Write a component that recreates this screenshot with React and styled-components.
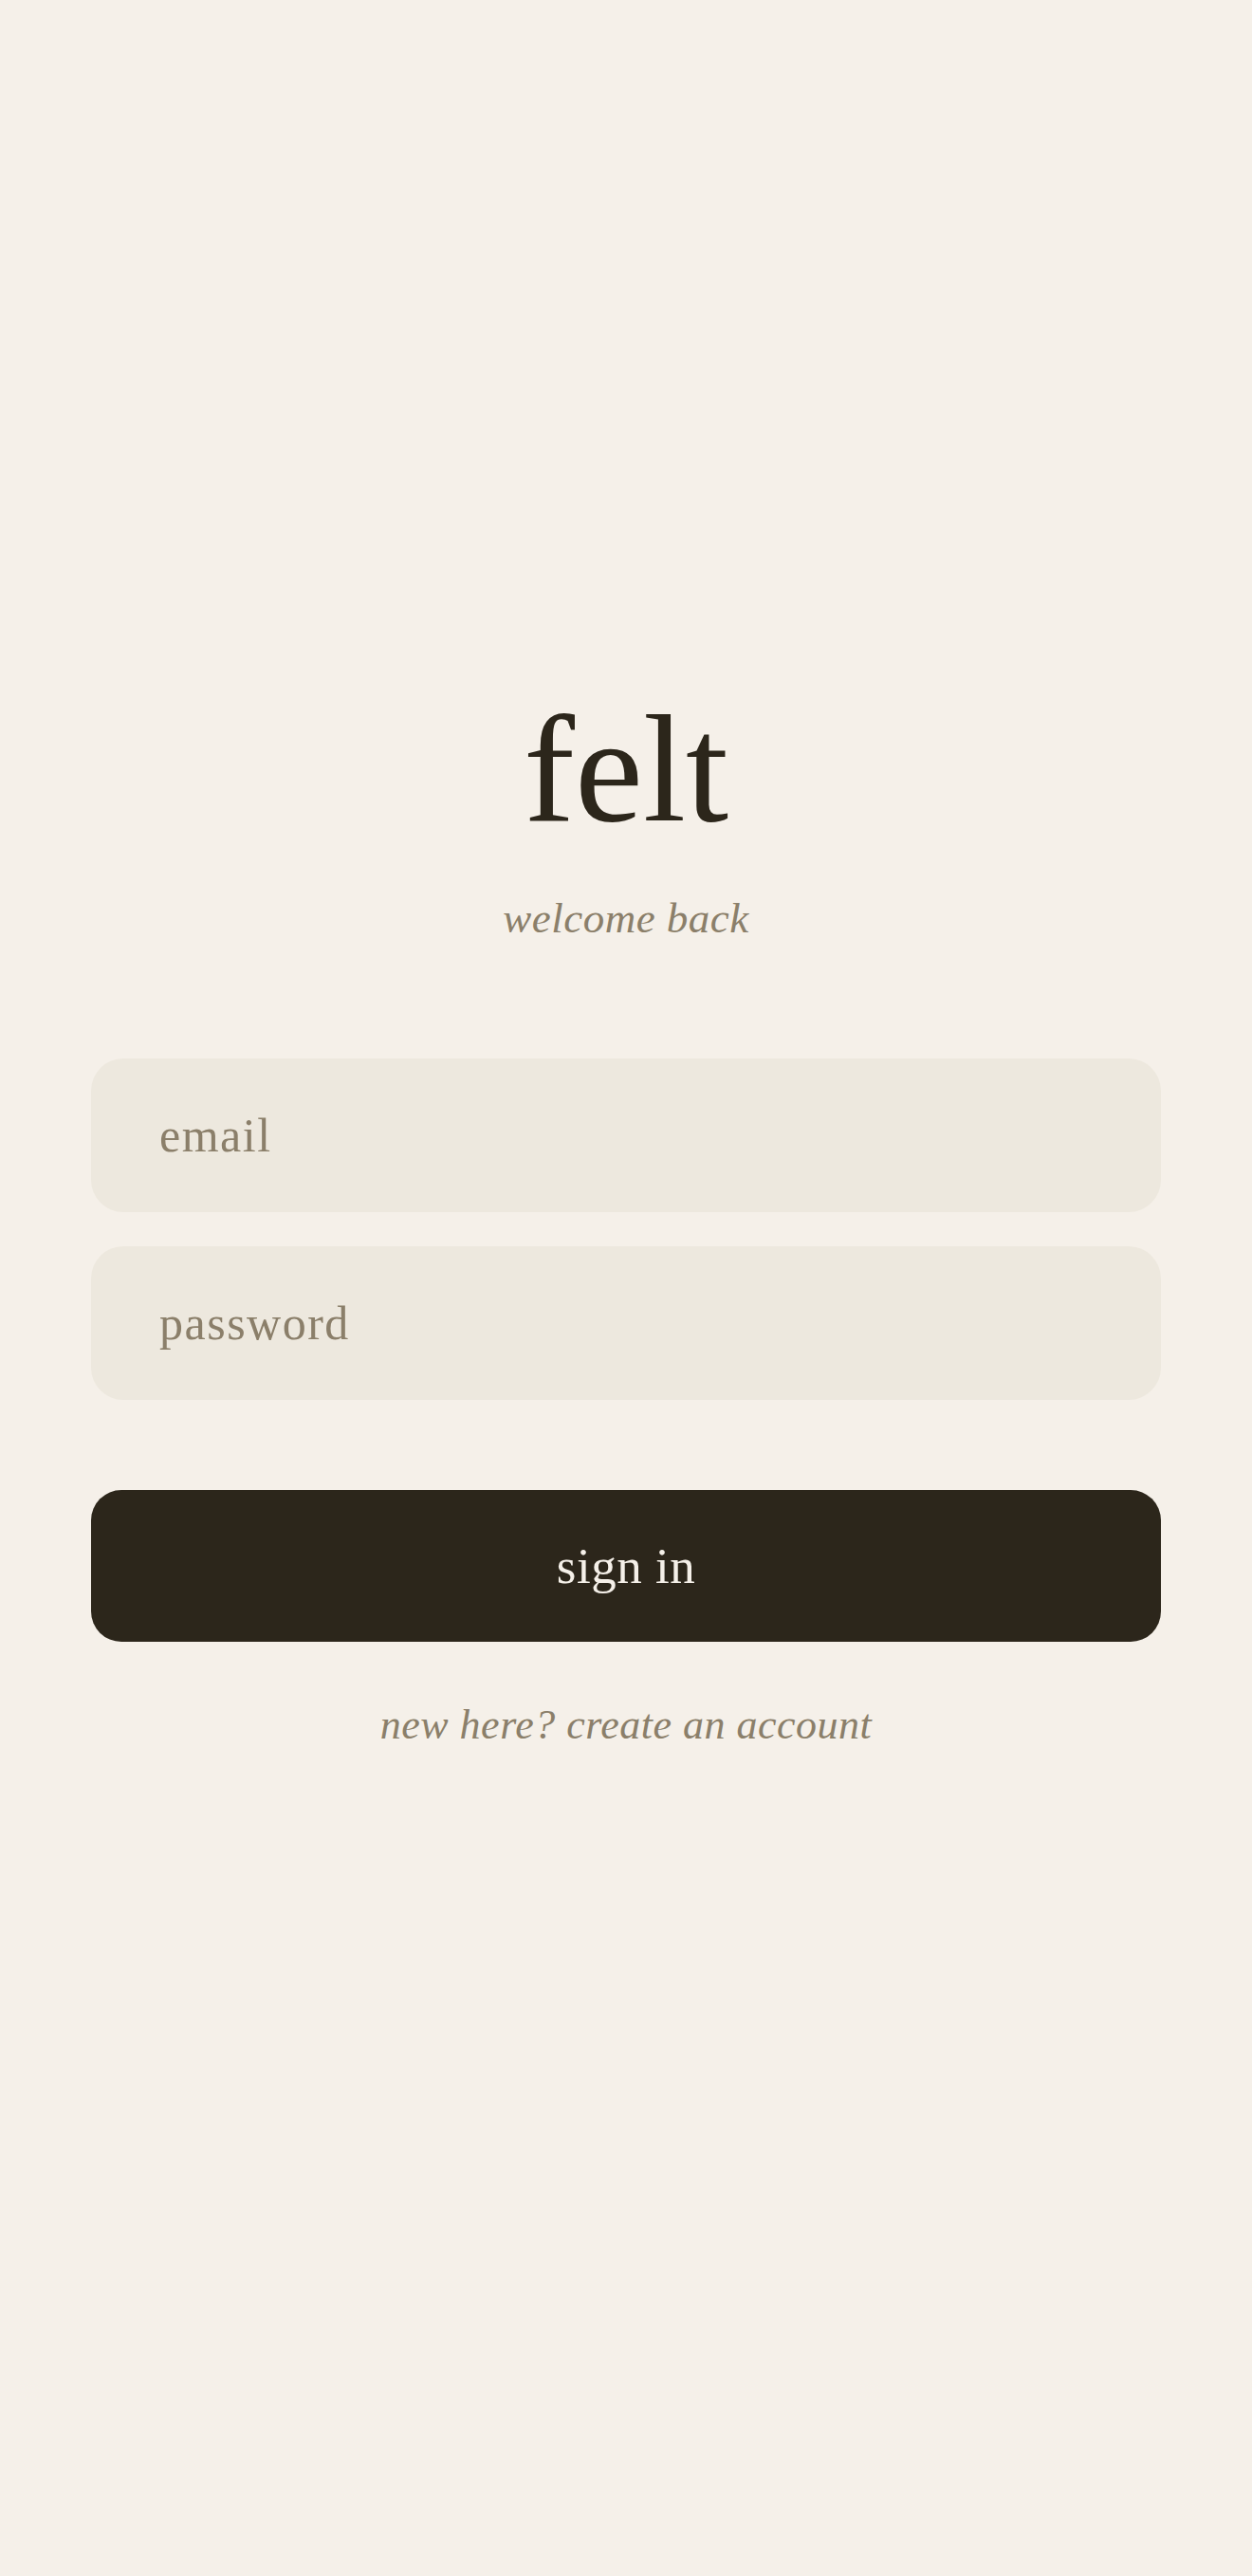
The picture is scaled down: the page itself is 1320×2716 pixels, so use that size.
import React from 'react';
import styled, { createGlobalStyle } from 'styled-components';

const GlobalStyle = createGlobalStyle`
  html, body {
    margin: 0;
    padding: 0;
    background: #f5f0e9;
  }
  * {
    box-sizing: border-box;
  }
`

export const Page = styled.main`
  min-height: 2716px;
  background: #f5f0e9;
  font-family: "Liberation Serif", "DejaVu Serif", serif;
  display: flex;
  flex-direction: column;
  align-items: center;
  padding: 730px 96px 0;
`

export const Logo = styled.h1`
  margin: 0;
  font-size: 162px;
  line-height: 1;
  font-weight: 400;
  color: #2c261b;
  letter-spacing: 0;
`

export const Tagline = styled.p`
  margin: 54px 0 0;
  font-size: 45px;
  line-height: 1;
  font-style: italic;
  color: #8b7f6a;
  letter-spacing: 0.5px;
`

export const Form = styled.form`
  width: 100%;
  margin-top: 125px;
  display: flex;
  flex-direction: column;
  gap: 36px;
`

export const Field = styled.input`
  width: 100%;
  height: 162px;
  border: none;
  outline: none;
  border-radius: 34px;
  background: #ede8de;
  padding: 0 72px;
  font-family: inherit;
  font-size: 50px;
  letter-spacing: 1.5px;
  color: #2c261b;

  &::placeholder {
    color: #8b7f6a;
    opacity: 1;
  }
`

export const SubmitButton = styled.button`
  width: 100%;
  height: 160px;
  margin-top: 59px;
  border: none;
  border-radius: 32px;
  background: #2c261b;
  color: #f5f0e9;
  font-family: inherit;
  font-size: 53px;
  letter-spacing: 0.5px;
  cursor: pointer;
`

export const SignupLink = styled.a`
  margin-top: 66px;
  font-size: 44px;
  line-height: 1;
  font-style: italic;
  color: #8b7f6a;
  letter-spacing: 0.5px;
  text-decoration: none;
  cursor: pointer;
`

const App = () => {
  return (
    <>
      <GlobalStyle />
      <Page>
        <Logo>felt</Logo>
        <Tagline>welcome back</Tagline>
        <Form onSubmit={(e) => e.preventDefault()}>
          <Field type="email" placeholder="email" />
          <Field type="password" placeholder="password" />
          <SubmitButton type="submit">sign in</SubmitButton>
        </Form>
        <SignupLink>new here? create an account</SignupLink>
      </Page>
    </>
  )
}

export default App;
